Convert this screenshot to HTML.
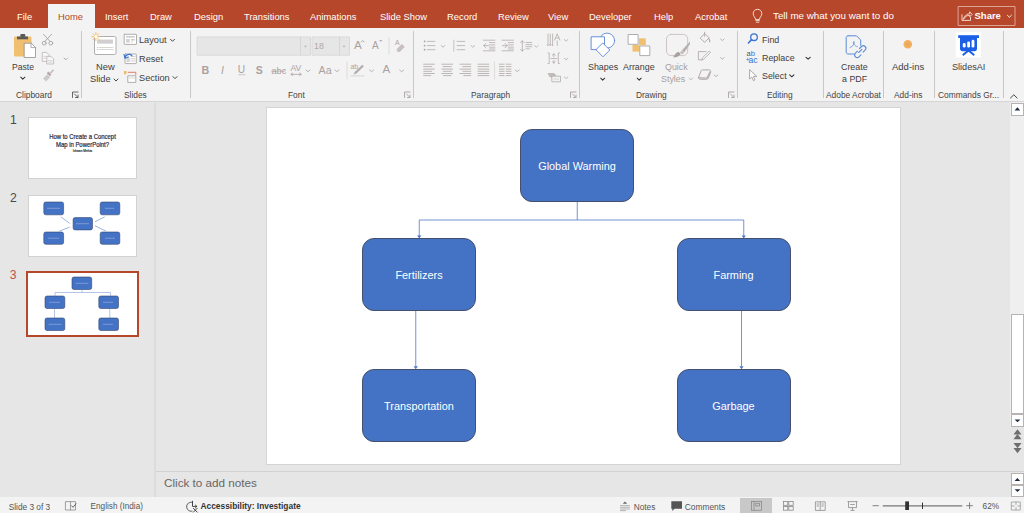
<!DOCTYPE html>
<html><head><meta charset="utf-8">
<style>
*{margin:0;padding:0;box-sizing:border-box}
html,body{width:1024px;height:513px;overflow:hidden;background:#e6e6e6;font-family:"Liberation Sans",sans-serif;position:relative}
.a{position:absolute}
.t{position:absolute;white-space:nowrap;line-height:12px;color:#404040}
#top{left:0;top:0;width:1024px;height:28px;background:#b7472a}
.tab{position:absolute;top:11px;color:#fff;font-size:9.4px;line-height:12px;white-space:nowrap}
#home{left:48px;top:4px;width:47px;height:24px;background:#f3f3f3}
#ribbon{left:0;top:28px;width:1024px;height:73px;background:#f3f3f3}
#rbline{left:0;top:101px;width:1024px;height:1px;background:#d6d6d6}
.sep{position:absolute;width:1px;background:#c8c8c8}
.lbl{position:absolute;top:89.3px;font-size:8.4px;line-height:12px;color:#444;white-space:nowrap}
.btn{font-size:9px;color:#404040}
.dis{color:#a8a0a0}
#pane{left:0;top:102px;width:155px;height:395px;background:#e6e6e6}
#pdiv{left:154px;top:103px;width:2px;height:394px;background:#dcdcdc}
#slide{left:267px;top:108px;width:633px;height:356px;background:#fff;box-shadow:0 0 0 1px #d4d4d4}
#notesline{left:156px;top:471px;width:868px;height:1px;background:#d2d2d2}
#status{left:0;top:497px;width:1024px;height:16px;background:#f3f3f3}
.box{position:absolute;background:#4472c4;border:1px solid #44506c;border-radius:12px;color:#fff;font-size:10.9px;display:flex;align-items:center;justify-content:center}
</style></head><body>
<div id="top" class="a"></div>
<div id="home" class="a"></div>
<div class="tab" style="left:17px">File</div>
<div class="tab" style="left:58px;color:#b7472a">Home</div>
<div class="tab" style="left:105px">Insert</div>
<div class="tab" style="left:150px">Draw</div>
<div class="tab" style="left:194px">Design</div>
<div class="tab" style="left:244px">Transitions</div>
<div class="tab" style="left:310px">Animations</div>
<div class="tab" style="left:380px">Slide Show</div>
<div class="tab" style="left:447px">Record</div>
<div class="tab" style="left:498px">Review</div>
<div class="tab" style="left:548px">View</div>
<div class="tab" style="left:589px">Developer</div>
<div class="tab" style="left:654px">Help</div>
<div class="tab" style="left:695px">Acrobat</div>
<div class="tab" style="left:773px;top:10px;font-size:9.8px">Tell me what you want to do</div>


<svg class="a" style="left:0;top:0" width="1024" height="28" viewBox="0 0 1024 28">
<g fill="none" stroke-linecap="round" stroke-linejoin="round">
<path d="M755.6 19.2c-0.3-2-2.4-3-2.4-5.6 0-2.5 1.9-4.3 4.3-4.3s4.3 1.8 4.3 4.3c0 2.6-2.1 3.6-2.4 5.6z" stroke="#f4dcd4" stroke-width="1"/>
<path d="M755.8 20.6h3.6M756.3 22.2h2.6" stroke="#f4dcd4" stroke-width="0.9"/>
<rect x="958.5" y="6.5" width="56.5" height="19" stroke="#dba495" stroke-width="1"/>
<path d="M962 14.8v5.6h8.5v-3" stroke="#f6e4df" stroke-width="0.9"/>
<path d="M963.5 19c1-3.5 3.5-5 6.2-5.2v-2l2.4 2.6-2.4 2.4v-1.6c-2.4 0-4.4 1.4-6.2 3.8z" stroke="#f6e4df" stroke-width="0.9"/>
<path d="M1007.4 15.3l2 1.9 2-1.9" stroke="#fff" stroke-width="0.9"/>
</g>
</svg>
<div class="t" style="left:974.5px;top:10px;font-size:9.5px;font-weight:bold;color:#fff">Share</div>
<div id="ribbon" class="a"></div>
<div id="rbline" class="a"></div>


<svg class="a" style="left:0;top:0" width="1024" height="102" viewBox="0 0 1024 102">
<g fill="none" stroke-linecap="round" stroke-linejoin="round">
<!-- Paste -->
<rect x="14" y="36.5" width="17.5" height="20" rx="1" fill="#f0c070"/>
<rect x="17" y="36.5" width="11" height="2.8" fill="#5a5a5a"/>
<rect x="20.3" y="34" width="5" height="3" rx="1" fill="#5a5a5a"/>
<path d="M24.5 43.2h6.8l4.2 4.2v10.1h-11z" fill="#fff" stroke="#9a9a9a" stroke-width="0.9"/>
<path d="M31 43.2v4.4h4.5" stroke="#9a9a9a" stroke-width="0.8"/>
<path d="M20.7 77.2l2.1 2 2.1-2" stroke="#333" stroke-width="1.05"/>
<!-- Scissors -->
<g stroke="#a9a1a1" stroke-width="0.9">
<path d="M43.5 34.3L50.2 41.6M51.5 34.3L44.8 41.6"/>
<circle cx="44.2" cy="43.2" r="1.9"/><circle cx="50.8" cy="43.2" r="1.9"/>
</g>
<!-- Copy -->
<g stroke="#bdb5b5" stroke-width="0.8" fill="#f6f6f6">
<path d="M42.6 52.4h4l2.4 2.4v6.6h-6.4z"/>
<path d="M47.2 56.4h4l2.4 2.4v5.2h-6.4z"/>
</g>
<path d="M43.8 56.5h3M43.8 58.3h3M48.4 60.5h3.8M48.4 62.2h3.8" stroke="#cbc4c4" stroke-width="0.6"/>
<path d="M64 58l1.8 1.8 1.8-1.8" stroke="#999" stroke-width="0.8"/>
<!-- Brush -->
<path d="M43 78.5l4.2-4.2 3 3-4.2 4.2z" fill="#cfcaca"/>
<path d="M46.8 73.2l1.6-1.6 3 3-1.6 1.6z" fill="#b3a9a9"/>
<path d="M49.6 72.4l3.4-3.2 1.2 1.2-3.2 3.4" fill="#c9c0c0"/>
<!-- launcher -->
<g stroke="#444" stroke-width="0.8"><path d="M72.5 97.5v-5.5h5.5M74.5 94l3.5 3.5M78 95v2.5h-2.5"/></g>
<!-- New slide -->
<rect x="94.5" y="36.5" width="21.5" height="18" rx="1.5" fill="#fff" stroke="#a8a4a4" stroke-width="0.9"/>
<rect x="97.2" y="39.6" width="15.8" height="4" fill="#d0cece"/>
<path d="M99 47.5h14M99 49.5h14" stroke="#c8c4c4" stroke-width="0.7"/>
<circle cx="97.5" cy="47.5" r="0.5" fill="#b0b0b0"/><circle cx="97.5" cy="49.5" r="0.5" fill="#b0b0b0"/>
<g stroke="#f0b850" stroke-width="0.9"><path d="M95.9 32.6v8M91.9 36.6h8M93.1 33.8l5.6 5.6M98.7 33.8l-5.6 5.6"/></g>
<circle cx="95.9" cy="36.6" r="1.6" fill="#fff"/>
<path d="M114 79l2 2 2-2" stroke="#333" stroke-width="0.9"/>
<!-- Layout icon -->
<rect x="124.2" y="34.3" width="12.3" height="10.1" rx="0.5" fill="#fff" stroke="#a8a4a4" stroke-width="0.9"/>
<rect x="126" y="36" width="8.7" height="1.6" fill="#ccc"/>
<rect x="126" y="39" width="3.8" height="3.6" fill="#d4d4d4"/>
<rect x="131" y="39" width="3.7" height="1.5" fill="#ccc"/>
<rect x="131" y="41.5" width="2" height="0.8" fill="#ccc"/>
<path d="M170.5 39.3l2 2 2-2" stroke="#333" stroke-width="0.9"/>
<!-- Reset icon -->
<rect x="125" y="54" width="11.3" height="9.6" rx="0.5" fill="#fff" stroke="#a8a4a4" stroke-width="0.9"/>
<rect x="126.5" y="57.5" width="3.3" height="4.5" fill="#d4d4d4"/>
<path d="M131 56.5h3.8M131 58.8h3.8M131 61h3.8" stroke="#c4c0c0" stroke-width="0.8"/>
<path d="M125 57.5c0.5-3 4.5-4.2 6.8-2" stroke="#3b73d1" stroke-width="1.3"/>
<path d="M124 54.6l1 3.6 3.3-1.3" stroke="#3b73d1" stroke-width="1.1"/>
<!-- Section icon -->
<rect x="124" y="71" width="2.4" height="3.2" fill="#f0b860"/>
<path d="M128.2 72.3h7.6v2.2" stroke="#d9705a" stroke-width="0.9"/>
<rect x="128.2" y="75.8" width="7.6" height="6.6" fill="#fff" stroke="#a8a4a4" stroke-width="0.9"/>
<path d="M129.5 78h5" stroke="#ccc" stroke-width="0.8"/>
<path d="M173 76.6l2 2 2-2" stroke="#333" stroke-width="0.9"/>
</g>
</svg>


<svg class="a" style="left:0;top:0" width="1024" height="102" viewBox="0 0 1024 102">
<g fill="none" stroke-linecap="round" stroke-linejoin="round">
<!-- Font boxes -->
<rect x="197.5" y="37" width="113" height="18.2" fill="#e6e6e6" stroke="#d9d9d9" stroke-width="1"/>
<path d="M300.5 37v18.2" stroke="#d6d6d6" stroke-width="1"/>
<path d="M304 45.8h3l-1.5 1.6z" fill="#b9b3b3"/>
<rect x="312.5" y="37" width="37" height="18.2" fill="#e6e6e6" stroke="#d9d9d9" stroke-width="1"/>
<path d="M339.5 37v18.2" stroke="#d6d6d6" stroke-width="1"/>
<path d="M342.5 45.8h3l-1.5 1.6z" fill="#b9b3b3"/>
<path d="M389 37.5v17" stroke="#dadada" stroke-width="0.9"/>
<path d="M347 62v17" stroke="#dadada" stroke-width="0.9"/>
<path d="M494.5 62v17" stroke="#dadada" stroke-width="0.9"/>
<!-- grow/shrink caret -->
<path d="M361.3 42l1.4-1.5 1.4 1.5" stroke="#a9a0a0" stroke-width="0.9"/>
<path d="M379 40.2h3.6l-1.8 1.6z" fill="#a9a0a0"/>
<!-- clear formatting -->
<path d="M396.8 49l5.2-5.2 3 3-5.2 5.2h-1.8l-1.2-1.2z" fill="#c9c1c1"/>
<path d="M402 43.8l3 3" stroke="#f3f3f3" stroke-width="0.6"/>
<!-- font row2 decor -->
<path d="M238.5 74.7h6.5" stroke="#c6bebe" stroke-width="0.8"/>
<path d="M271.5 71.1h13.2" stroke="#a9a0a0" stroke-width="0.7"/>
<path d="M291 74.3h10.2M292.6 73l-1.6 1.3 1.6 1.3M299.6 73l1.6 1.3-1.6 1.3" stroke="#a9a0a0" stroke-width="0.8"/>
<g stroke="#aaa2a2" stroke-width="0.8">
<path d="M306 70l2 1.7 2-1.7M335 70l2 1.7 2-1.7M369.6 70l2 1.7 2-1.7M399.6 70l2 1.7 2-1.7"/>
</g>
<!-- highlighter -->
<path d="M353.6 74.4l1-2.4 7.7-7.3 1.6 1.5-7.4 7.3z" fill="#b5acac"/>
<path d="M351 75.9h13" stroke="#dcdcdc" stroke-width="1.2"/>
<!-- paragraph row1 -->
<g fill="#aaa1a1"><circle cx="424.6" cy="41.4" r="0.9"/><circle cx="424.6" cy="45.6" r="0.9"/><circle cx="424.6" cy="49.7" r="0.9"/></g>
<g stroke="#b3abab" stroke-width="0.8">
<path d="M427.3 41.4h7.6M427.3 45.6h7.6M427.3 49.7h7.6"/>
<path d="M457.1 41.4h7.6M457.1 45.6h7.6M457.1 49.7h7.6"/>
<path d="M453.8 40.2v11.2" stroke-dasharray="1.2 1.2"/>
<path d="M483.3 40.2h11.6M483.3 50.8h11.6M489.5 42.6h5.4M489.5 44.9h5.4M489.5 47.2h5.4M489.5 49h5.4"/>
<path d="M488.5 45.6h-4.8M486 43.4l-2.3 2.2 2.3 2.2"/>
<path d="M502 40.2h11.4M502 50.8h11.4M508.2 42.6h5.2M508.2 44.9h5.2M508.2 47.2h5.2M508.2 49h5.2"/>
<path d="M502.4 45.6h4.6M505 43.4l2.2 2.2-2.2 2.2"/>
<path d="M522.3 40.8v10.4M520.5 42.6l1.8-1.8 1.8 1.8M520.5 49.4l1.8 1.8 1.8-1.8"/>
<path d="M525.9 42.5h5.9M525.9 44.6h5.9M525.9 46.7h5.9M525.9 48.8h3.5"/>
<path d="M441.2 45.6l1.8 1.6 1.8-1.6M471 45.6l1.8 1.6 1.8-1.6M534.6 45.6l1.8 1.6 1.8-1.6"/>
</g>
<!-- paragraph row2 -->
<g stroke="#b7afaf" stroke-width="0.9">
<path d="M423.7 64.2h10.7M423.7 66.6h8M423.7 69.1h10.7M423.7 71.3h8M423.7 73.5h10.7M423.7 75.6h7"/>
<path d="M441.8 64.2h10.8M443.2 66.6h8M441.8 69.1h10.8M443.2 71.3h8M441.8 73.5h10.8M443.4 75.6h7.6"/>
<path d="M460 64.2h10.8M462.8 66.6h8M460 69.1h10.8M462.8 71.3h8M460 73.5h10.8M463.8 75.6h7"/>
<path d="M478 64.2h10.9M478 66.6h10.9M478 69.1h10.9M478 71.3h10.9M478 73.5h10.9M478 75.6h10.9"/>
<path d="M499.4 64.2h4.8M506.2 64.2h4.8M499.4 66.6h4.8M506.2 66.6h4.8M499.4 69.1h4.8M506.2 69.1h4.8M499.4 71.3h4.8M506.2 71.3h4.8M499.4 73.5h4.8M506.2 73.5h4.8M499.4 75.6h4.8M506.2 75.6h4.8"/>
</g>
<path d="M515.2 70l2 1.7 2-1.7" stroke="#aaa2a2" stroke-width="0.8"/>
<!-- para column 3 -->
<g stroke="#b3abab" stroke-width="0.8">
<path d="M548 34v11.5M550.3 34v11.5M552.6 34v11.5M548 45.5l-0.8-1M550.3 45.5l-0.8-1M552.6 45.5l-0.8-1"/>
<path d="M554.6 40l2.6-6.2 2.6 6.2M555.6 38h3.2M557.2 41v4.5"/>
<path d="M548 53h1.2v10.5H548M559.5 53h-1.2v10.5h1.2"/>
<path d="M551 58.5h6"/>
<path d="M553.8 53.8v3M552.4 55.2l1.4-1.4 1.4 1.4M553.8 60.5v2.6M552.4 61.7l1.4 1.4 1.4-1.4"/>
<path d="M564.3 39.5l1.8 1.6 1.8-1.6M564.3 58.2l1.8 1.6 1.8-1.6M564.3 77l1.8 1.6 1.8-1.6"/>
</g>
<path d="M547.5 73h6.5l2.4 2.6-1.8 1.6h-5z" fill="#c3bbbb"/>
<rect x="552.2" y="76.2" width="8.3" height="5.6" fill="#f3f3f3" stroke="#b3abab" stroke-width="0.8"/>
<path d="M554 79h4.6" stroke="#c8c0c0" stroke-width="0.7" stroke-dasharray="1 0.8"/>
<g stroke="#aaa1a1" stroke-width="0.9"><path d="M404.5 97.5v-5.5h5.5M406.5 94l3.5 3.5M410 95v2.5h-2.5"/><path d="M570.5 97.5v-5.5h5.5M572.5 94l3.5 3.5M576 95v2.5h-2.5"/></g>
</g>
</svg>
<div class="t dis" style="left:314px;top:40px;font-size:8.8px;color:#b0a8a8">18</div>
<div class="t dis" style="left:354px;top:39px;font-size:11.7px;color:#aaa1a1">A</div>
<div class="t dis" style="left:372px;top:40px;font-size:10px;color:#aaa1a1">A</div>
<div class="t dis" style="left:395px;top:37px;font-size:6.8px;color:#aaa1a1">A</div>
<div class="t dis" style="left:201.5px;top:63.5px;font-size:10.7px;font-weight:bold;color:#aaa1a1">B</div>
<div class="t dis" style="left:221px;top:63.5px;font-size:10.7px;font-style:italic;color:#aaa1a1">I</div>
<div class="t dis" style="left:237.8px;top:63.5px;font-size:10.2px;color:#aaa1a1">U</div>
<div class="t dis" style="left:255.8px;top:63.5px;font-size:10.5px;font-weight:bold;color:#aaa1a1">S</div>
<div class="t dis" style="left:271.5px;top:64.5px;font-size:9.2px;color:#aaa1a1">abc</div>
<div class="t dis" style="left:290.5px;top:62.2px;font-size:8.6px;color:#aaa1a1">AV</div>
<div class="t dis" style="left:318.5px;top:63.5px;font-size:10.7px;color:#aaa1a1">Aa</div>
<div class="t dis" style="left:350.6px;top:61.3px;font-size:6.8px;color:#aaa1a1">ab</div>
<div class="t dis" style="left:382.6px;top:63px;font-size:11.5px;color:#aaa1a1">A</div>


<svg class="a" style="left:0;top:0" width="1024" height="102" viewBox="0 0 1024 102">
<g fill="none" stroke-linecap="round" stroke-linejoin="round">
<!-- Shapes -->
<circle cx="607.1" cy="40.6" r="7.5" fill="#fff" stroke="#5a86d4" stroke-width="0.9"/>
<rect x="591.5" y="36.8" width="13" height="12.8" fill="#fff" stroke="#5a86d4" stroke-width="0.9"/>
<path d="M603 43.2l6.8 6.8-6.8 6.8-6.8-6.8z" fill="#fff" stroke="#5a86d4" stroke-width="0.9"/>
<path d="M600.7 78.2l2 1.9 2-1.9" stroke="#333" stroke-width="1.05"/>
<!-- Arrange -->
<rect x="639" y="38.3" width="6.8" height="6.8" fill="#f0c070"/>
<rect x="632.5" y="45" width="7" height="6.6" fill="#f0c070"/>
<rect x="628.5" y="34.5" width="9.6" height="9.8" fill="#fff" stroke="#a8a4a4" stroke-width="0.9"/>
<rect x="640.2" y="46" width="9.6" height="9.6" fill="#fff" stroke="#a8a4a4" stroke-width="0.9"/>
<path d="M637.2 78.2l2 1.9 2-1.9" stroke="#333" stroke-width="1.05"/>
<!-- Quick styles -->
<rect x="666.5" y="34.4" width="21.2" height="21.2" rx="4.5" stroke="#c8c0c0" stroke-width="0.9"/>
<path d="M673.2 57.6c1.5-3 3-5 5.3-5.8l2.2 2.2c-1 2-4 3.2-7.5 3.6z" fill="#a9a0a0"/>
<path d="M679.8 52.4l2.2-2.2 2.2 2.2-2.2 2.2z" fill="#c6bebe"/>
<path d="M682 50.2l8-8.8v2.6l-5.8 8.4" fill="#b8afaf"/>
<path d="M689 78.2l1.8 1.6 1.8-1.6" stroke="#b0a8a8" stroke-width="0.8"/>
<!-- fill bucket -->
<path d="M700.5 37.8l4.3-4.3 4.3 4.3-4.3 4.3z" stroke="#aaa1a1" stroke-width="0.9"/>
<path d="M704.6 32.2v4.2" stroke="#aaa1a1" stroke-width="0.8"/>
<path d="M708.8 38.5c0.8 1 1.2 2.2 0.9 3.3" stroke="#aaa1a1" stroke-width="1.1"/>
<!-- outline pen -->
<path d="M706 51.6h-7.6v8.2h3" stroke="#aaa1a1" stroke-width="0.8"/>
<path d="M701.8 59.8l0.8-2.2 6.6-6.6 1.4 1.4-6.6 6.6z" stroke="#aaa1a1" stroke-width="0.7" fill="#f3f3f3"/>
<!-- effects -->
<path d="M698.5 77.5l2.6-6.6c0.3-0.7 0.8-1 1.5-1h6.5c1.2 0 2 1 1.6 2.2l-2.3 6c-0.3 0.8-1 1.2-1.8 1.2h-6.3c-1.2 0-2-0.8-1.8-1.8z" fill="#f3f3f3" stroke="#aaa1a1" stroke-width="0.9"/>
<path d="M699 77.8l8 0.3 3-6" stroke="#bbb3b3" stroke-width="1.4"/>
<path d="M720.5 39l1.8 1.6 1.8-1.6M720.5 57.6l1.8 1.6 1.8-1.6M714.2 75l1.8 1.6 1.8-1.6" stroke="#aaa2a2" stroke-width="0.8"/>
<g stroke="#aaa1a1" stroke-width="0.9"><path d="M728.5 97.5v-5.5h5.5M730.5 94l3.5 3.5M734 95v2.5h-2.5"/></g>
<!-- Find -->
<circle cx="754" cy="37.2" r="3.3" stroke="#3b73d1" stroke-width="1.3"/>
<path d="M751.6 39.6l-3.2 3.4" stroke="#3b73d1" stroke-width="1.6"/>
<path d="M806 57.4l2.1 1.8 2.1-1.8" stroke="#333" stroke-width="1.1"/>
<!-- Select cursor -->
<path d="M749.6 70v9l2.2-2 1.6 3.6 1.6-0.8-1.6-3.4h3z" fill="#fff" stroke="#9a9494" stroke-width="0.8"/>
<path d="M789.7 74.9l2.1 1.9 2.1-1.9" stroke="#333" stroke-width="1.1"/>
<!-- PDF -->
<path d="M848 35.8h8.5l4.2 4.2v5.5M853.5 54h-5.5c-1 0-1.8-0.8-1.8-1.8V37.6c0-1 0.8-1.8 1.8-1.8" stroke="#5b8bd8" stroke-width="1"/>
<path d="M850 47.5c1.8-0.8 3.8-2 4.2-4.5 0.2-1.2-0.2-2-0.6-1.2-0.8 1.6 0.8 4 3.8 5" stroke="#5b8bd8" stroke-width="0.8"/>
<path d="M859.5 48.5l2-2c1-1 2.6-1 3.6 0s1 2.6 0 3.6l-2 2M861 54.8l-2 2c-1 1-2.6 1-3.6 0s-1-2.6 0-3.6l2-2M858.7 52.5l3.2-3.2" stroke="#5b8bd8" stroke-width="1.1"/>
<!-- Addins dot -->
<circle cx="907.8" cy="44.3" r="4.3" fill="#f0b060"/>
<circle cx="907.8" cy="44.3" r="2" fill="#e8a058" opacity="0.6"/>
<!-- SlidesAI -->
<rect x="955.7" y="32.2" width="25.2" height="25.3" fill="#fff"/>
<path d="M958.2 35.2h20.8v2.8h-20.8z" fill="#1a5fe6"/>
<path d="M960 38h17v10.8c0 1.5-1 2.5-2.5 2.5h-12c-1.5 0-2.5-1-2.5-2.5z" fill="#1a5fe6"/>
<path d="M968.5 50.5l-5.2 4.2M968.5 50.5l5.2 4.2" stroke="#1a5fe6" stroke-width="2"/>
<rect x="962.8" y="43" width="2.8" height="4.6" rx="1.3" fill="#fff"/>
<rect x="967.2" y="41.5" width="2.8" height="6.1" rx="1.3" fill="#fff"/>
<rect x="971.6" y="39.8" width="2.8" height="7.8" rx="1.3" fill="#fff"/>
<!-- collapse ribbon -->
<path d="M1010.5 98l3.3-3.2 3.3 3.2" stroke="#444" stroke-width="1"/>
</g>
</svg>
<div class="t" style="left:746.6px;top:47.8px;font-size:7.6px;color:#555">a<span style="color:#3b6fcf">b</span></div>
<div class="t" style="left:748.6px;top:53.6px;font-size:8.6px;color:#3b6fcf">ac</div>
<div class="t" style="left:745.8px;top:54.2px;font-size:6.5px;color:#3b6fcf">+</div>

<!-- separators -->
<div class="sep" style="left:81px;top:31px;height:67px"></div>
<div class="sep" style="left:190px;top:31px;height:67px"></div>
<div class="sep" style="left:413px;top:31px;height:67px"></div>
<div class="sep" style="left:579px;top:31px;height:67px"></div>
<div class="sep" style="left:737px;top:31px;height:67px"></div>
<div class="sep" style="left:823px;top:31px;height:67px"></div>
<div class="sep" style="left:883px;top:31px;height:67px"></div>
<div class="sep" style="left:934px;top:31px;height:67px"></div>
<div class="sep" style="left:1003px;top:31px;height:67px"></div>
<!-- group labels -->
<div class="lbl" style="left:16px">Clipboard</div>
<div class="lbl" style="left:124px">Slides</div>
<div class="lbl" style="left:288px">Font</div>
<div class="lbl" style="left:471px">Paragraph</div>
<div class="lbl" style="left:636px">Drawing</div>
<div class="lbl" style="left:767px">Editing</div>
<div class="lbl" style="left:826px">Adobe Acrobat</div>
<div class="lbl" style="left:894px">Add-ins</div>
<div class="lbl" style="left:938px">Commands Gr...</div>
<!-- button texts -->
<div class="t btn" style="left:12px;top:61px;font-size:8.6px">Paste</div>
<div class="t btn" style="left:96px;top:61px;font-size:9.3px">New</div>
<div class="t btn" style="left:90px;top:73px;font-size:9.3px">Slide</div>
<div class="t btn" style="left:139px;top:34px;font-size:9.2px">Layout</div>
<div class="t btn" style="left:139px;top:53px;font-size:9.2px">Reset</div>
<div class="t btn" style="left:139px;top:72px;font-size:9.2px">Section</div>
<div class="t btn" style="left:588px;top:61px;font-size:8.9px">Shapes</div>
<div class="t btn" style="left:623px;top:61px;font-size:8.9px">Arrange</div>
<div class="t btn dis" style="left:665px;top:61px;font-size:8.9px">Quick</div>
<div class="t btn dis" style="left:661px;top:73px;font-size:8.9px">Styles</div>
<div class="t btn" style="left:762px;top:34px;font-size:8.9px">Find</div>
<div class="t btn" style="left:762px;top:52px;font-size:8.9px">Replace</div>
<div class="t btn" style="left:762px;top:70px;font-size:8.9px">Select</div>
<div class="t btn" style="left:841px;top:61px;font-size:8.9px">Create</div>
<div class="t btn" style="left:842px;top:73px;font-size:8.9px">a PDF</div>
<div class="t btn" style="left:892px;top:61px;font-size:9.5px">Add-ins</div>
<div class="t btn" style="left:952px;top:61px;font-size:9.1px">SlidesAI</div>

<div id="pane" class="a"></div>
<div id="pdiv" class="a"></div>
<div class="t" style="left:10px;top:113.8px;font-size:12.2px;color:#4a4a4a">1</div>
<div class="t" style="left:10px;top:191.8px;font-size:12.2px;color:#4a4a4a">2</div>
<div class="t" style="left:9.8px;top:268.8px;font-size:12.2px;color:#c0504d">3</div>
<div class="a" style="left:28px;top:117px;width:109px;height:62px;background:#fff;border:1px solid #d2d2d2"></div>
<div class="t" style="left:28px;top:133px;width:109px;text-align:center;font-size:6.6px;line-height:7.6px;color:#1f2940;-webkit-text-stroke:0.2px #1f2940;transform:scaleX(0.9);transform-origin:50% 0">How to Create a Concept<br>Map in PowerPoint?</div>
<div class="t" style="left:28px;top:148.5px;width:109px;text-align:center;font-size:3.2px;line-height:4px;color:#333;-webkit-text-stroke:0.15px #333">Ishaan Mehta</div>
<div class="a" style="left:28px;top:195px;width:109px;height:62px;background:#fff;border:1px solid #d2d2d2"></div>
<div class="a" style="left:26px;top:271px;width:113px;height:66px;background:#fff;border:2.3px solid #b7472a"></div>
<svg class="a" style="left:0;top:0" width="160" height="340" viewBox="0 0 160 340">
<g fill="#4472c4" stroke="#34466e" stroke-width="0.6">
<rect x="43.8" y="202" width="19.8" height="12.8" rx="2"/>
<rect x="100.2" y="202" width="19.6" height="12.8" rx="2"/>
<rect x="73.1" y="217.6" width="19.4" height="12.3" rx="2"/>
<rect x="43.8" y="232" width="19.8" height="12.3" rx="2"/>
<rect x="100.2" y="232" width="19.6" height="12.3" rx="2"/>
</g>
<g stroke="#5b84cc" stroke-width="0.6" fill="none">
<path d="M60.9 216.9L69.7 223.4M69.7 227.1L59.2 231.2M95 221.7L104.8 216.9M95 225.8L105.9 231"/>
</g>
<g fill="#7d9ad6">
<rect x="47" y="207.8" width="13" height="1"/><rect x="105" y="207.8" width="9" height="1"/>
<rect x="76" y="223.2" width="13" height="1"/><rect x="48" y="237.7" width="11" height="1"/><rect x="105" y="237.7" width="10" height="1"/>
</g>
<g fill="none" stroke="#7f9fd8" stroke-width="0.6">
<path d="M82 289.5v3M55 292.5h55.5M55 292.5v3.2M110.5 292.5v3.2M54.5 308.5v9.5M109.8 308.5v9.5"/>
</g>
<g fill="#4472c4" stroke="#34466e" stroke-width="0.6">
<rect x="72" y="277" width="19.7" height="12.5" rx="2"/>
<rect x="45" y="296" width="19.8" height="12.5" rx="2"/>
<rect x="98.8" y="296" width="19.7" height="12.5" rx="2"/>
<rect x="45" y="318" width="19.8" height="12.5" rx="2"/>
<rect x="98.8" y="318" width="19.7" height="12.5" rx="2"/>
</g>
<g fill="#7d9ad6">
<rect x="75.5" y="282.8" width="13" height="1"/><rect x="49" y="301.8" width="11" height="1"/><rect x="103" y="301.8" width="10" height="1"/>
<rect x="48.5" y="323.8" width="13" height="1"/><rect x="103" y="323.8" width="10" height="1"/>
</g>
</svg>

<div id="slide" class="a"></div>

<svg class="a" style="left:0;top:0" width="1024" height="513" viewBox="0 0 1024 513">
<g fill="none" stroke="#4472c4" stroke-width="0.75">
<path d="M577.25 202v18M419.25 220h324.5M419.25 220v16M743.75 220v16M415.75 311v55M741.5 311v55"/>
</g>
<g fill="#4472c4">
<path d="M417.2 235.5h4.1l-2.05 3z"/>
<path d="M741.7 235.5h4.1l-2.05 3z"/>
<path d="M413.7 366.2h4.1l-2.05 3z"/>
<path d="M739.45 366.2h4.1l-2.05 3z"/>
</g>
</svg>
<div class="box" style="left:520px;top:129px;width:114px;height:73px">Global Warming</div>
<div class="box" style="left:362px;top:238px;width:114px;height:73px">Fertilizers</div>
<div class="box" style="left:676.5px;top:238px;width:114px;height:73px">Farming</div>
<div class="box" style="left:362px;top:369px;width:114px;height:73px">Transportation</div>
<div class="box" style="left:676.5px;top:369px;width:114px;height:73px">Garbage</div>
<div id="notesline" class="a"></div>
<div class="t" style="left:164px;top:477px;font-size:11.7px;color:#666">Click to add notes</div>
<div id="status" class="a"></div>

<!-- main scrollbar -->
<div class="a" style="left:1010px;top:102px;width:14px;height:325px;background:#efefef"></div>
<div class="a" style="left:1010.5px;top:102.5px;width:13.5px;height:13px;background:#fff;border:1px solid #b8b2b2"></div>
<div class="a" style="left:1010.5px;top:314px;width:13.5px;height:99.5px;background:#fff;border:1px solid #b8b2b2"></div>
<div class="a" style="left:1010.5px;top:414px;width:13.5px;height:12.5px;background:#fff;border:1px solid #b8b2b2"></div>
<!-- notes scrollbar -->
<div class="a" style="left:1010.5px;top:473px;width:13.5px;height:12px;background:#fff;border:1px solid #b8b2b2"></div>
<div class="a" style="left:1010.5px;top:485px;width:13.5px;height:11.5px;background:#fff;border:1px solid #b8b2b2"></div>
<svg class="a" style="left:0;top:0" width="1024" height="513" viewBox="0 0 1024 513">
<g fill="#1e2a44">
<path d="M1014.6 110.5l2.8-3.2 2.8 3.2z"/>
<path d="M1014.6 419.4h5.8l-2.9 2.8z"/>
<path d="M1014.6 481l2.8-3 2.8 3z"/>
<path d="M1014.6 489.2h5.8l-2.9 2.8z"/>
</g>
<g fill="#6e6e6e">
<path d="M1013.5 434.5l4-5.2 4 5.2z"/><path d="M1013.5 439.3l4-5.2 4 5.2z"/>
<path d="M1013.5 443h8l-4 5.2z"/><path d="M1013.5 448h8l-4 5.2z"/>
</g>
<g fill="none" stroke-linecap="round" stroke-linejoin="round">
<!-- spell book -->
<path d="M65.8 501.6h4.7v8.4h-4.7zM70.5 501.6h5v8.4h-5" stroke="#8a8a8a" stroke-width="0.8"/>
<path d="M71.6 505.8l1.4 1.5 3-3.5" stroke="#555" stroke-width="0.9"/>
<!-- accessibility -->
<path d="M192 502.3a4.5 4.5 0 1 0 0.2 8.8" stroke="#555" stroke-width="1" stroke-dasharray="1.3 0.7"/>
<path d="M192.5 501.2v5.2h4.2M195.4 505l1.4 1.4-1.4 1.4M193.4 508.3l3.8 3.8M197.2 508.3l-3.8 3.8" stroke="#333" stroke-width="0.9"/>
<!-- notes icon -->
<path d="M622.8 503.8l2.2-2.4 2.2 2.4z" fill="#666"/>
<path d="M620.5 505.6h9M620.5 507.3h9M620.5 509h9M620.5 510.6h5" stroke="#999" stroke-width="0.7"/>
<!-- comments -->
<path d="M671.3 501.2h10.7v7.6h-7.5l-2.2 2.3v-2.3h-1z" fill="#555"/>
<!-- zoom slider -->
<path d="M873 505.7h5.4M966.6 505.7h5.9M969.55 502.8v5.8" stroke="#666" stroke-width="0.8"/>
<path d="M883.2 505.8h78.6" stroke="#777" stroke-width="1.3"/>
<path d="M922.5 503v5.6" stroke="#333" stroke-width="1"/>
<rect x="905.2" y="501.4" width="3.8" height="8.6" fill="#333"/>
<path d="M1011.7 502h8.6v8h-8.6zM1016 502v2.5M1016 507.5v2.5M1011.7 506h2.5M1017.8 506h2.5" stroke="#999" stroke-width="0.8"/>
</g>
</svg>
<!-- status bar contents -->
<div class="t" style="left:8.7px;top:500.5px;font-size:8.3px;color:#555">Slide 3 of 3</div>
<div class="t" style="left:90.6px;top:500.5px;font-size:8.2px;color:#555">English (India)</div>
<div class="t" style="left:200.5px;top:500px;font-size:8.4px;font-weight:bold;color:#333">Accessibility: Investigate</div>
<div class="t" style="left:633.7px;top:500.5px;font-size:8.3px;color:#555">Notes</div>
<div class="t" style="left:684.8px;top:500.5px;font-size:8.4px;color:#555">Comments</div>
<div class="a" style="left:740px;top:497.5px;width:32px;height:15.5px;background:#c8c8c8"></div>
<div class="t" style="left:982.6px;top:500.5px;font-size:8.24px;color:#555">62%</div>
<svg class="a" style="left:0;top:0" width="1024" height="513" viewBox="0 0 1024 513">
<g fill="none" stroke="#8a8a8a" stroke-width="0.8">
<rect x="751.6" y="501.5" width="9.8" height="8.8"/><path d="M754 501.5v8.8"/><rect x="755.8" y="503.3" width="3.8" height="2.6"/>
<rect x="783.4" y="501.5" width="4.4" height="3.8"/><rect x="788.8" y="501.5" width="4.4" height="3.8"/><rect x="783.4" y="506.4" width="4.4" height="3.8"/><rect x="788.8" y="506.4" width="4.4" height="3.8"/>
<path d="M815.4 501.8h4.8v8.6h-4.8zM820.2 501.8h5v8.6h-5M816.6 504h2.4M816.6 506h2.4M821.4 504h2.4M821.4 506h2.4"/>
<path d="M847.5 501.6h10M848.5 501.6v6h8v-6M852.5 507.6v2.6M850.5 510.4h4M850.2 504.5h4.6"/>
</g>
</svg>
</body></html>
